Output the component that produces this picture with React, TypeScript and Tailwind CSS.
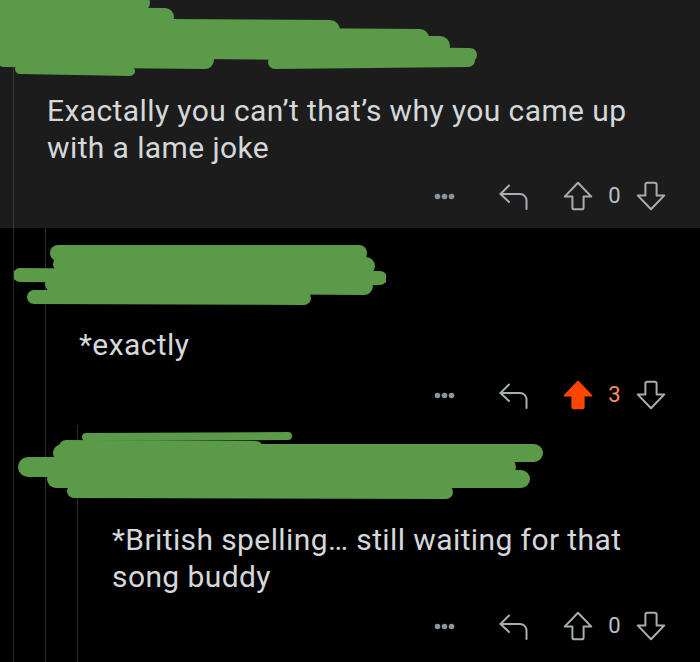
import React from "react";

type Stroke = [number, number, number, number, number];

function Scribble({ width, height, strokes, className }: { width: number; height: number; strokes: Stroke[]; className?: string }) {
  return (
    <svg width={width} height={height} viewBox={`0 0 ${width} ${height}`} className={className}>
      {strokes.map(([x1, y1, x2, y2, w], i) => (
        <line key={i} x1={x1} y1={y1} x2={x2} y2={y2} stroke="#5a9a48" strokeWidth={w} strokeLinecap="round" />
      ))}
    </svg>
  );
}

function Dots() {
  return (
    <svg width="21" height="7" viewBox="0 0 21 7" className="text-[#8b949a]">
      <circle cx="3.5" cy="3.5" r="2.8" fill="currentColor" />
      <circle cx="10.5" cy="3.5" r="2.8" fill="currentColor" />
      <circle cx="17.5" cy="3.5" r="2.8" fill="currentColor" />
    </svg>
  );
}

function ReplyIcon() {
  return (
    <svg width="30" height="28" viewBox="0 0 30 28" fill="none" stroke="#a6aeb2" strokeWidth="2" strokeLinecap="round" strokeLinejoin="round">
      <path d="M10 3.5 1.5 12 10 20" />
      <path d="M1.5 12H21a6.5 6.5 0 0 1 6.5 6.5V27" />
    </svg>
  );
}

function VoteArrow({ down, filled }: { down?: boolean; filled?: boolean }) {
  return (
    <svg width="30" height="30" viewBox="0 0 30 30" className={down ? "rotate-180" : ""}>
      <path
        d="M15 1.8 28.3 15.6H20.6V26.4Q20.6 28.3 18.7 28.3H11.3Q9.4 28.3 9.4 26.4V15.6H1.7Z"
        fill={filled ? "#ff4500" : "none"}
        stroke={filled ? "#ff4500" : "#a6aeb2"}
        strokeWidth="2"
        strokeLinejoin="round"
      />
    </svg>
  );
}

function Actions({ score, voted }: { score: number; voted?: boolean }) {
  return (
    <div className="flex h-[30px] items-center justify-end pr-[34px]">
      <Dots />
      <div className="ml-[44px]">
        <ReplyIcon />
      </div>
      <div className="ml-[34px]">
        <VoteArrow filled={voted} />
      </div>
      <span className={`mx-[15px] text-[22px] leading-none ${voted ? "text-[#f98d62]" : "text-[#b9c0c4]"}`}>{score}</span>
      <VoteArrow down />
    </div>
  );
}

export default function App() {
  return (
    <div className="h-[662px] w-[700px] overflow-hidden bg-black font-['Roboto',sans-serif] text-[30px] leading-[37px] tracking-[0.4px] text-[#d4d8da]">
      <section className="flex h-[228px] bg-[#1c1c1c]">
        <div className="w-[13px] shrink-0" />
        <div className="flex-1 border-l border-[#383838]">
          <Scribble
            width={480}
            height={80}
            className="-ml-[14px] block"
            strokes={[
              [0, 4, 142, 3, 16],
              [0, 16, 165, 17, 18],
              [4, 28, 330, 30, 20],
              [140, 36, 420, 38, 18],
              [2, 44, 440, 46, 20],
              [200, 52, 470, 55, 14],
              [4, 58, 205, 60, 18],
              [275, 62, 468, 60, 14],
              [20, 69, 130, 71, 10],
            ]}
          />
          <p className="mt-[12px] pl-[33px]">
            Exactally you can’t that’s why you came up
            <br />
            with a lame joke
          </p>
          <div className="mt-[15px]">
            <Actions score={0} />
          </div>
        </div>
      </section>

      <section className="flex h-[434px]">
        <div className="w-[13px] shrink-0" />
        <div className="flex flex-1 border-l border-[#262626]">
          <div className="w-[31px] shrink-0" />
          <div className="flex-1 border-l border-[#2a2a2a]">
            <Scribble
              width={372}
              height={64}
              className="mt-[16px] -ml-[32px] block"
              strokes={[
                [44, 9, 345, 9, 16],
                [48, 20, 352, 22, 18],
                [6, 31, 366, 34, 14],
                [40, 40, 350, 42, 18],
                [20, 53, 290, 54, 14],
              ]}
            />
            <p className="mt-[18px] pl-[33px]">*exactly</p>
            <div className="mt-[17px]">
              <Actions score={3} voted />
            </div>

            <div className="mt-[15px] flex h-[240px]">
              <div className="w-[31px] shrink-0" />
              <div className="flex-1 border-l border-[#2a2a2a]">
                <Scribble
                  width={530}
                  height={74}
                  className="mt-[4px] -ml-[62px] block"
                  strokes={[
                    [70, 8, 272, 7, 8],
                    [50, 18, 240, 19, 14],
                    [46, 24, 518, 24, 18],
                    [12, 38, 490, 38, 20],
                    [40, 50, 505, 50, 18],
                    [58, 62, 430, 63, 14],
                  ]}
                />
                <p className="mt-[18px] pl-[34px]">
                  *British spelling… still waiting for that
                  <br />
                  song buddy
                </p>
                <div className="mt-[16px]">
                  <Actions score={0} />
                </div>
              </div>
            </div>
          </div>
        </div>
      </section>
    </div>
  );
}
